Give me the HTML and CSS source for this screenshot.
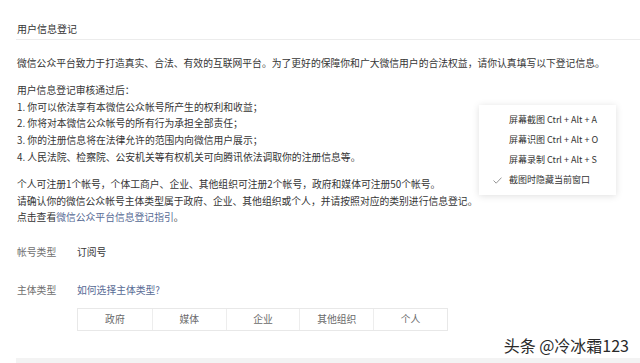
FILE: index.html
```html
<!DOCTYPE html>
<html lang="zh-CN">
<head>
  <meta charset="UTF-8" />
  <title>用户信息登记</title>
  <link rel="stylesheet" href="styles.css">
</head>
<body>
  <div class="page">
    <div class="title">用户信息登记</div>

    <div class="intro">
      <p>微信公众平台致力于打造真实、合法、有效的互联网平台。为了更好的保障你和广大微信用户的合法权益，请你认真填写以下登记信息。</p>
      <p>用户信息登记审核通过后：<br>
        1. 你可以依法享有本微信公众帐号所产生的权利和收益；<br>
        2. 你将对本微信公众帐号的所有行为承担全部责任；<br>
        3. 你的注册信息将在法律允许的范围内向微信用户展示；<br>
        4. 人民法院、检察院、公安机关等有权机关可向腾讯依法调取你的注册信息等。</p>
      <p>个人可注册1个帐号，个体工商户、企业、其他组织可注册2个帐号，政府和媒体可注册50个帐号。<br>
        请确认你的微信公众帐号主体类型属于政府、企业、其他组织或个人，并请按照对应的类别进行信息登记。<br>
        点击查看<a href="#">微信公众平台信息登记指引</a>。</p>
    </div>

    <div class="form">
      <div class="form-row">
        <span class="label">帐号类型</span>
        <span class="value">订阅号</span>
      </div>
      <div class="form-row">
        <span class="label">主体类型</span>
        <div class="field">
          <a href="#">如何选择主体类型?</a>
          <div class="types">
            <span>政府</span>
            <span>媒体</span>
            <span>企业</span>
            <span>其他组织</span>
            <span>个人</span>
          </div>
        </div>
      </div>
    </div>

    <div class="band"></div>
  </div>

  <!-- 截图工具的右键菜单 -->
  <div class="menu">
    <div class="menu-item">屏幕截图 Ctrl + Alt + A</div>
    <div class="menu-item">屏幕识图 Ctrl + Alt + O</div>
    <div class="menu-item">屏幕录制 Ctrl + Alt + S</div>
    <div class="menu-item checked">
      <svg class="check" width="9" height="7" viewBox="0 0 9 7"><path d="M0.5 3.5 L3.2 6.2 L8.5 0.6" fill="none" stroke="#8a8a8a" stroke-width="0.9"/></svg>
      截图时隐藏当前窗口
    </div>
  </div>

  <div class="watermark">头条 @冷冰霜123</div>
</body>
</html>
```

FILE: styles.css
```css
body {
  margin: 0;
  background: #fff;
  font-family: "Noto Sans CJK SC", "Liberation Sans", sans-serif;
  color: #353535;
  font-size: 9.8px;
  line-height: 16.8px;
}

.page {
  padding-left: 16px;
}

/* Заголовок */
.title {
  font-size: 10px;
  line-height: 17px;
  padding: 20px 0 2px 1px;
  border-bottom: 1px solid #ececec;
}

.intro {
  margin-top: 15px;
  padding-left: 1px;
}

.intro p {
  margin: 0 0 10px;
}

.intro p:last-child {
  margin-bottom: 0;
}

a {
  color: #576b95;
  text-decoration: none;
}

/* Поля формы */
.form {
  margin-top: 18px;
  padding-left: 1px;
}

.form-row {
  display: flex;
}

.form-row + .form-row {
  margin-top: 21px;
}

.label {
  width: 60px;
  flex: none;
  color: #6f6f6f;
}

.types {
  margin-top: 9px;
  width: 371px;
  height: 23px;
  box-sizing: border-box;
  display: grid;
  grid-template-columns: repeat(5, 1fr);
  border: 1px solid #e8e8e8;
}

.types span {
  text-align: center;
  line-height: 21px;
  color: #6a6a6a;
  border-left: 1px solid #ededed;
}

.types span:first-child {
  border-left: none;
}

.band {
  margin-top: 27px;
  height: 6px;
  background: #f3f3f3;
}

/* Меню поверх страницы */
.menu {
  position: absolute;
  left: 479px;
  top: 105px;
  width: 137px;
  padding: 5px 0;
  background: #fff;
  box-shadow: 0 1px 7px rgba(0, 0, 0, 0.13);
  font-size: 9px;
  color: #333;
}

.menu-item {
  position: relative;
  line-height: 20px;
  padding-left: 30px;
}

.check {
  position: absolute;
  left: 14px;
  top: 7px;
}

.watermark {
  position: absolute;
  right: 11px;
  top: 334px;
  font-size: 16px;
  line-height: 22px;
  color: #2a2a2a;
  text-shadow: 0 0 2px #fff, 0 0 2px #fff;
}
```
